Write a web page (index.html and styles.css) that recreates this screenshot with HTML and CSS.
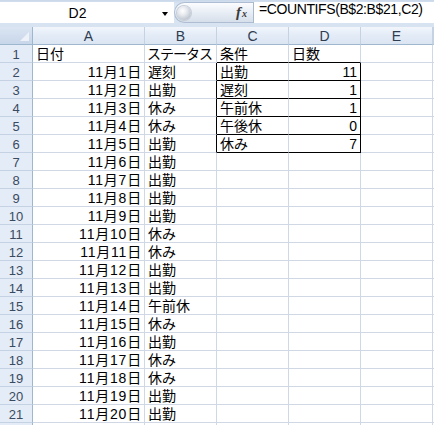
FILE: index.html
```
<!DOCTYPE html>
<html lang="ja">
<head>
<meta charset="utf-8">
<title>COUNTIFS</title>
<link rel="stylesheet" href="styles.css">
</head>
<body>
<div class="formula-bar">
  <div class="namebox"><span class="name">D2</span><span class="arrow"></span></div>
  <div class="splitter"><span class="knob"></span><span class="fx"><i class="f">f</i><i class="x">x</i></span></div>
  <div class="formula">=COUNTIFS(B$2:B$21,C2)</div>
</div>
<div class="sheet">
  <div class="corner"><span class="tri"></span></div>
  <div class="ch">A</div><div class="ch">B</div><div class="ch">C</div><div class="ch">D</div><div class="ch">E</div><div class="ch"></div>

  <div class="rh">1</div><div class="c">日付</div><div class="c tight">ステータス</div><div class="c bb">条件</div><div class="c bb">日数</div><div class="c"></div><div class="c"></div>
  <div class="rh">2</div><div class="c r">11月1日</div><div class="c br">遅刻</div><div class="c bb">出勤</div><div class="c n bb br">11</div><div class="c"></div><div class="c"></div>
  <div class="rh">3</div><div class="c r">11月2日</div><div class="c br">出勤</div><div class="c bb">遅刻</div><div class="c n bb br">1</div><div class="c"></div><div class="c"></div>
  <div class="rh">4</div><div class="c r">11月3日</div><div class="c br">休み</div><div class="c bb">午前休</div><div class="c n bb br">1</div><div class="c"></div><div class="c"></div>
  <div class="rh">5</div><div class="c r">11月4日</div><div class="c br">休み</div><div class="c bb">午後休</div><div class="c n bb br">0</div><div class="c"></div><div class="c"></div>
  <div class="rh">6</div><div class="c r">11月5日</div><div class="c br">出勤</div><div class="c bb">休み</div><div class="c n bb br">7</div><div class="c"></div><div class="c"></div>
  <div class="rh">7</div><div class="c r">11月6日</div><div class="c">出勤</div><div class="c"></div><div class="c"></div><div class="c"></div><div class="c"></div>
  <div class="rh">8</div><div class="c r">11月7日</div><div class="c">出勤</div><div class="c"></div><div class="c"></div><div class="c"></div><div class="c"></div>
  <div class="rh">9</div><div class="c r">11月8日</div><div class="c">出勤</div><div class="c"></div><div class="c"></div><div class="c"></div><div class="c"></div>
  <div class="rh">10</div><div class="c r">11月9日</div><div class="c">出勤</div><div class="c"></div><div class="c"></div><div class="c"></div><div class="c"></div>
  <div class="rh">11</div><div class="c r">11月10日</div><div class="c">休み</div><div class="c"></div><div class="c"></div><div class="c"></div><div class="c"></div>
  <div class="rh">12</div><div class="c r">11月11日</div><div class="c">休み</div><div class="c"></div><div class="c"></div><div class="c"></div><div class="c"></div>
  <div class="rh">13</div><div class="c r">11月12日</div><div class="c">出勤</div><div class="c"></div><div class="c"></div><div class="c"></div><div class="c"></div>
  <div class="rh">14</div><div class="c r">11月13日</div><div class="c">出勤</div><div class="c"></div><div class="c"></div><div class="c"></div><div class="c"></div>
  <div class="rh">15</div><div class="c r">11月14日</div><div class="c">午前休</div><div class="c"></div><div class="c"></div><div class="c"></div><div class="c"></div>
  <div class="rh">16</div><div class="c r">11月15日</div><div class="c">休み</div><div class="c"></div><div class="c"></div><div class="c"></div><div class="c"></div>
  <div class="rh">17</div><div class="c r">11月16日</div><div class="c">出勤</div><div class="c"></div><div class="c"></div><div class="c"></div><div class="c"></div>
  <div class="rh">18</div><div class="c r">11月17日</div><div class="c">休み</div><div class="c"></div><div class="c"></div><div class="c"></div><div class="c"></div>
  <div class="rh">19</div><div class="c r">11月18日</div><div class="c">休み</div><div class="c"></div><div class="c"></div><div class="c"></div><div class="c"></div>
  <div class="rh">20</div><div class="c r">11月19日</div><div class="c">出勤</div><div class="c"></div><div class="c"></div><div class="c"></div><div class="c"></div>
  <div class="rh">21</div><div class="c r">11月20日</div><div class="c">出勤</div><div class="c"></div><div class="c"></div><div class="c"></div><div class="c"></div>
  <div class="rh"></div><div class="c"></div><div class="c"></div><div class="c"></div><div class="c"></div><div class="c"></div><div class="c"></div>
</div>
</body>
</html>
```
FILE: styles.css
```
html, body {
  margin: 0;
  padding: 0;
  width: 434px;
  height: 425px;
  overflow: hidden;
  background: #ffffff;
  font-family: "Liberation Sans", "Noto Sans CJK JP", sans-serif;
}

.formula-bar {
  display: flex;
  height: 27px;
  box-sizing: border-box;
  padding: 2px 0 4px 0;
  background: linear-gradient(#c9d8ea, #dbe6f3 15%, #d7e3f1);
}

.namebox {
  display: flex;
  align-items: center;
  width: 174px;
  background: #ffffff;
}

.name {
  width: 155px;
  text-align: center;
  font-size: 14px;
  color: #000;
  padding-top: 1px;
}

.arrow {
  width: 0;
  height: 0;
  margin-left: 7px;
  margin-top: 2px;
  border-left: 3px solid transparent;
  border-right: 3px solid transparent;
  border-top: 4px solid #000;
}

.splitter {
  display: flex;
  align-items: center;
  width: 79px;
  box-sizing: border-box;
  border: 1px solid #aebdd1;
  border-right: none;
  border-radius: 11px 0 0 11px;
  background: linear-gradient(#fbfcfe, #e8eef5 50%, #d6dfea);
  padding-left: 2px;
}

.knob {
  width: 14px;
  height: 14px;
  border-radius: 50%;
  background: radial-gradient(circle at 40% 35%, #ffffff 0, #e6e9ee 35%, #b9c1cc 80%, #a6afbb 100%);
  box-shadow: 0 0 0 1px #c7ced8;
}

.fx {
  margin-left: auto;
  margin-right: 6px;
  font-family: "Liberation Serif", serif;
  font-style: italic;
  font-weight: bold;
  color: #3a3a3a;
  display: flex;
  align-items: baseline;
}

.fx .f {
  font-size: 15px;
}

.fx .x {
  font-size: 10px;
  margin-left: 1px;
}

.formula {
  flex: 1;
  background: #ffffff;
  border-left: 1px solid #a9b9cd;
  padding-left: 5px;
  font-size: 14px;
  line-height: 14px;
  letter-spacing: -0.4px;
  padding-top: 0;
  white-space: nowrap;
  overflow: hidden;
  color: #000;
}

.sheet {
  display: grid;
  grid-template-columns: 33px 112px 72px 72px 72px 72px 1px;
  grid-auto-rows: 18px;
}

.sheet > div {
  box-sizing: border-box;
  border-right: 1px solid #d0d7e5;
  border-bottom: 1px solid #d0d7e5;
  white-space: nowrap;
  overflow: hidden;
}

.sheet > .corner {
  background: linear-gradient(#dbe5f2, #c8d6ea);
  border-right: 1px solid #9eb6ce;
  border-bottom: 1px solid #9eb6ce;
  display: flex;
  justify-content: flex-end;
  align-items: flex-end;
}

.tri {
  width: 0;
  height: 0;
  margin: 0 3px 3px 0;
  border-left: 9px solid transparent;
  border-bottom: 9px solid #eef2f8;
}

.sheet > .ch {
  background: linear-gradient(#f2f6fb, #e4ecf7 45%, #dbe5f2);
  border-right: 1px solid #c5d2e3;
  border-bottom: 1px solid #9eb6ce;
  text-align: center;
  font-size: 14px;
  line-height: 19px;
  color: #2f3d52;
}

.sheet > .rh {
  background: #e4ecf7;
  border-right: 1px solid #9eb6ce;
  border-bottom: 1px solid #c5d2e3;
  text-align: center;
  font-size: 13px;
  line-height: 19px;
  color: #3a4a60;
}

.sheet > .c {
  font-size: 14px;
  line-height: 19px;
  padding: 0 3px;
  color: #000;
}

.sheet > .r {
  text-align: right;
  letter-spacing: 0.8px;
  padding-right: 2px;
}

.sheet > .n {
  text-align: right;
}

.sheet > .tight {
  padding-left: 2px;
  letter-spacing: -1px;
}

.sheet > .bb {
  border-bottom-color: #000;
}

.sheet > .br {
  border-right-color: #000;
}
```
